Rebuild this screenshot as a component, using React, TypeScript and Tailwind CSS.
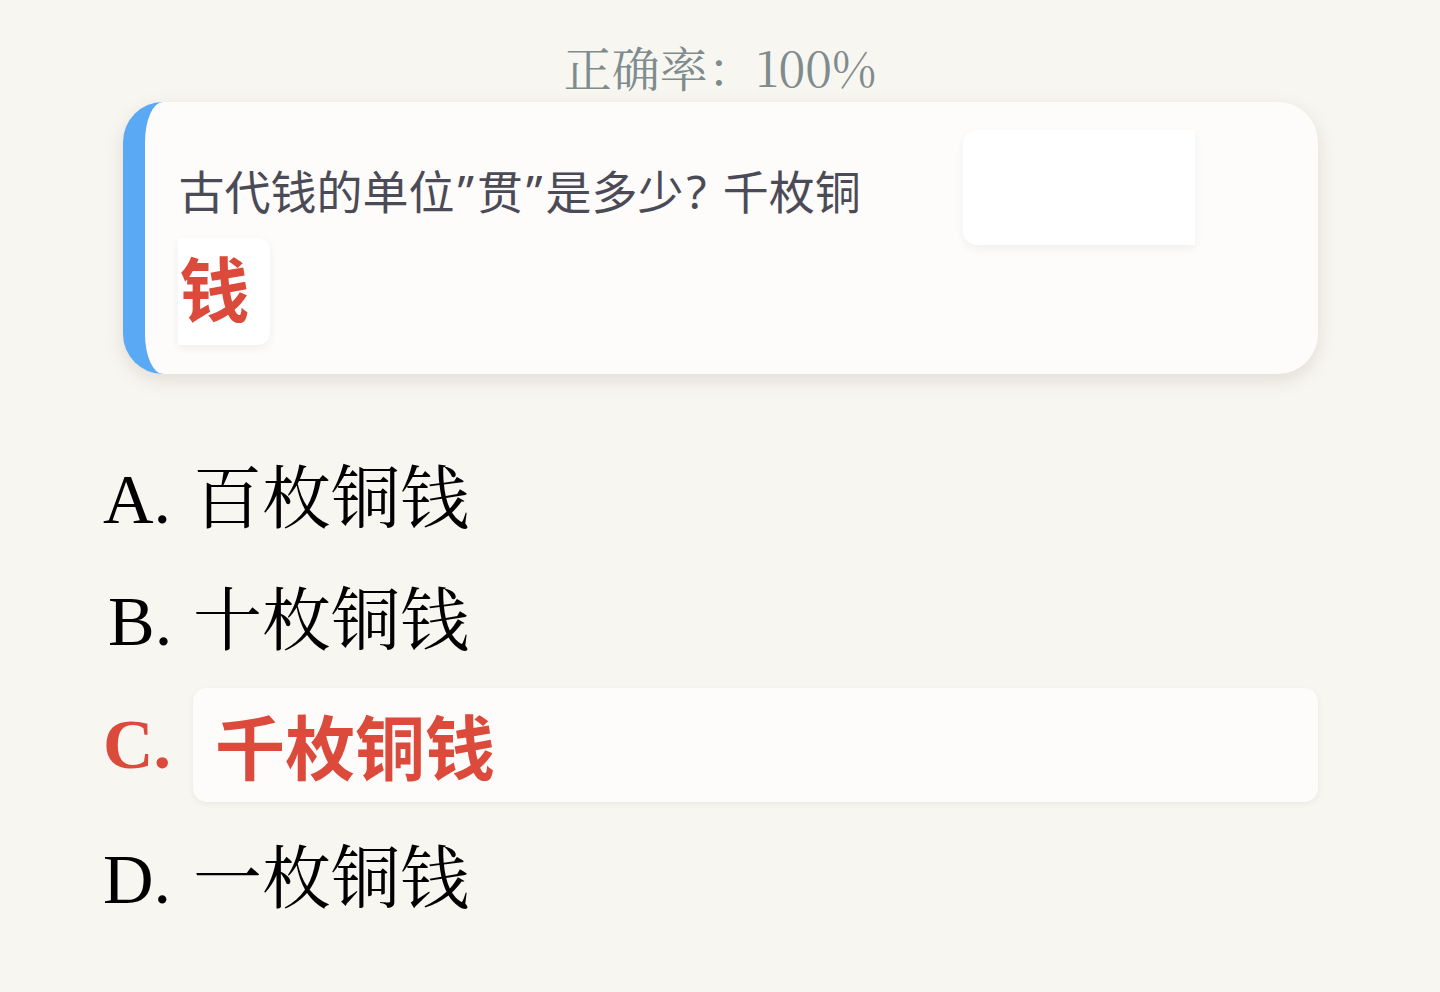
import React from "react";

const options = [
  { k: "A.", t: "百枚铜钱" },
  { k: "B.", t: "十枚铜钱" },
  { k: "C.", t: "千枚铜钱", ok: true },
  { k: "D.", t: "一枚铜钱" },
];

export default function App() {
  return (
    <div className="w-[1440px] h-[992px] bg-[#f8f6f1] flex flex-col items-center overflow-hidden">
      <div className="h-[102px] flex items-center justify-center pt-[32px] text-[48px] leading-none text-[#7f8c8d] font-['Noto_Serif_CJK_SC','Liberation_Serif',serif]">
        正确率：100%
      </div>
      <div className="relative w-[1195px] h-[272px] rounded-[40px] border-l-[22px] border-[#5aa9f5] bg-[#fdfcfa] shadow-[0_6px_18px_rgba(120,110,90,0.18)]">
        <div className="absolute left-[818px] top-[28px] w-[232px] h-[115px] rounded-l-[14px] bg-white shadow-[0_4px_10px_rgba(0,0,0,0.05)]" />
        <div className="pl-[34px] pt-[64px] text-[46px] leading-none text-[#4b4b57] font-['Noto_Sans_CJK_SC','Noto_Sans',sans-serif]">
          古代钱的单位<span className="px-[3px] font-['Noto_Sans',sans-serif]">”</span>贯<span className="px-[3px] font-['Noto_Sans',sans-serif]">”</span>是多少<span className="pl-[3px] pr-[6px] font-['Noto_Sans',sans-serif]">?</span> 千枚铜
        </div>
        <div className="mt-[24px] ml-[33px] w-[92px] h-[107px] flex items-center pl-[2px] pb-[10px] rounded-r-[12px] bg-white shadow-[0_3px_8px_rgba(0,0,0,0.06)]">
          <span className="text-[70px] leading-none font-bold text-[#dc4a3c] font-['Noto_Sans_CJK_SC',sans-serif]">钱</span>
        </div>
      </div>
      <div className="w-full mt-[86px] pl-[103px] pr-[122px] flex flex-col">
        {options.map((o) => (
          <div
            key={o.k}
            className={`flex items-center ${o.k === "A." ? "h-[80px]" : ""} ${o.k === "B." ? "h-[80px] mt-[42px]" : ""} ${o.k === "C." ? "h-[114px] mt-[26px]" : ""} ${o.k === "D." ? "h-[80px] mt-[38px]" : ""}`}
          >
            <div
              className={`w-[90px] text-[70px] leading-none font-['Liberation_Serif','Noto_Serif_CJK_SC',serif] ${o.ok ? "font-bold text-[#dc4a3c]" : "text-black"} ${o.k === "B." ? "pl-[5px]" : ""}`}
            >
              {o.k}
            </div>
            {o.ok ? (
              <div className="flex-1 h-[114px] flex items-center pl-[22px] rounded-[14px] bg-[#fdfcfa] shadow-[0_2px_6px_rgba(0,0,0,0.06)]">
                <span className="text-[70px] leading-none font-bold text-[#dc4a3c] font-['Noto_Sans_CJK_SC',sans-serif]">
                  {o.t}
                </span>
              </div>
            ) : (
              <div className="text-[69px] leading-none text-black font-['Liberation_Serif','Noto_Serif_CJK_SC',serif]">
                {o.t}
              </div>
            )}
          </div>
        ))}
      </div>
    </div>
  );
}
